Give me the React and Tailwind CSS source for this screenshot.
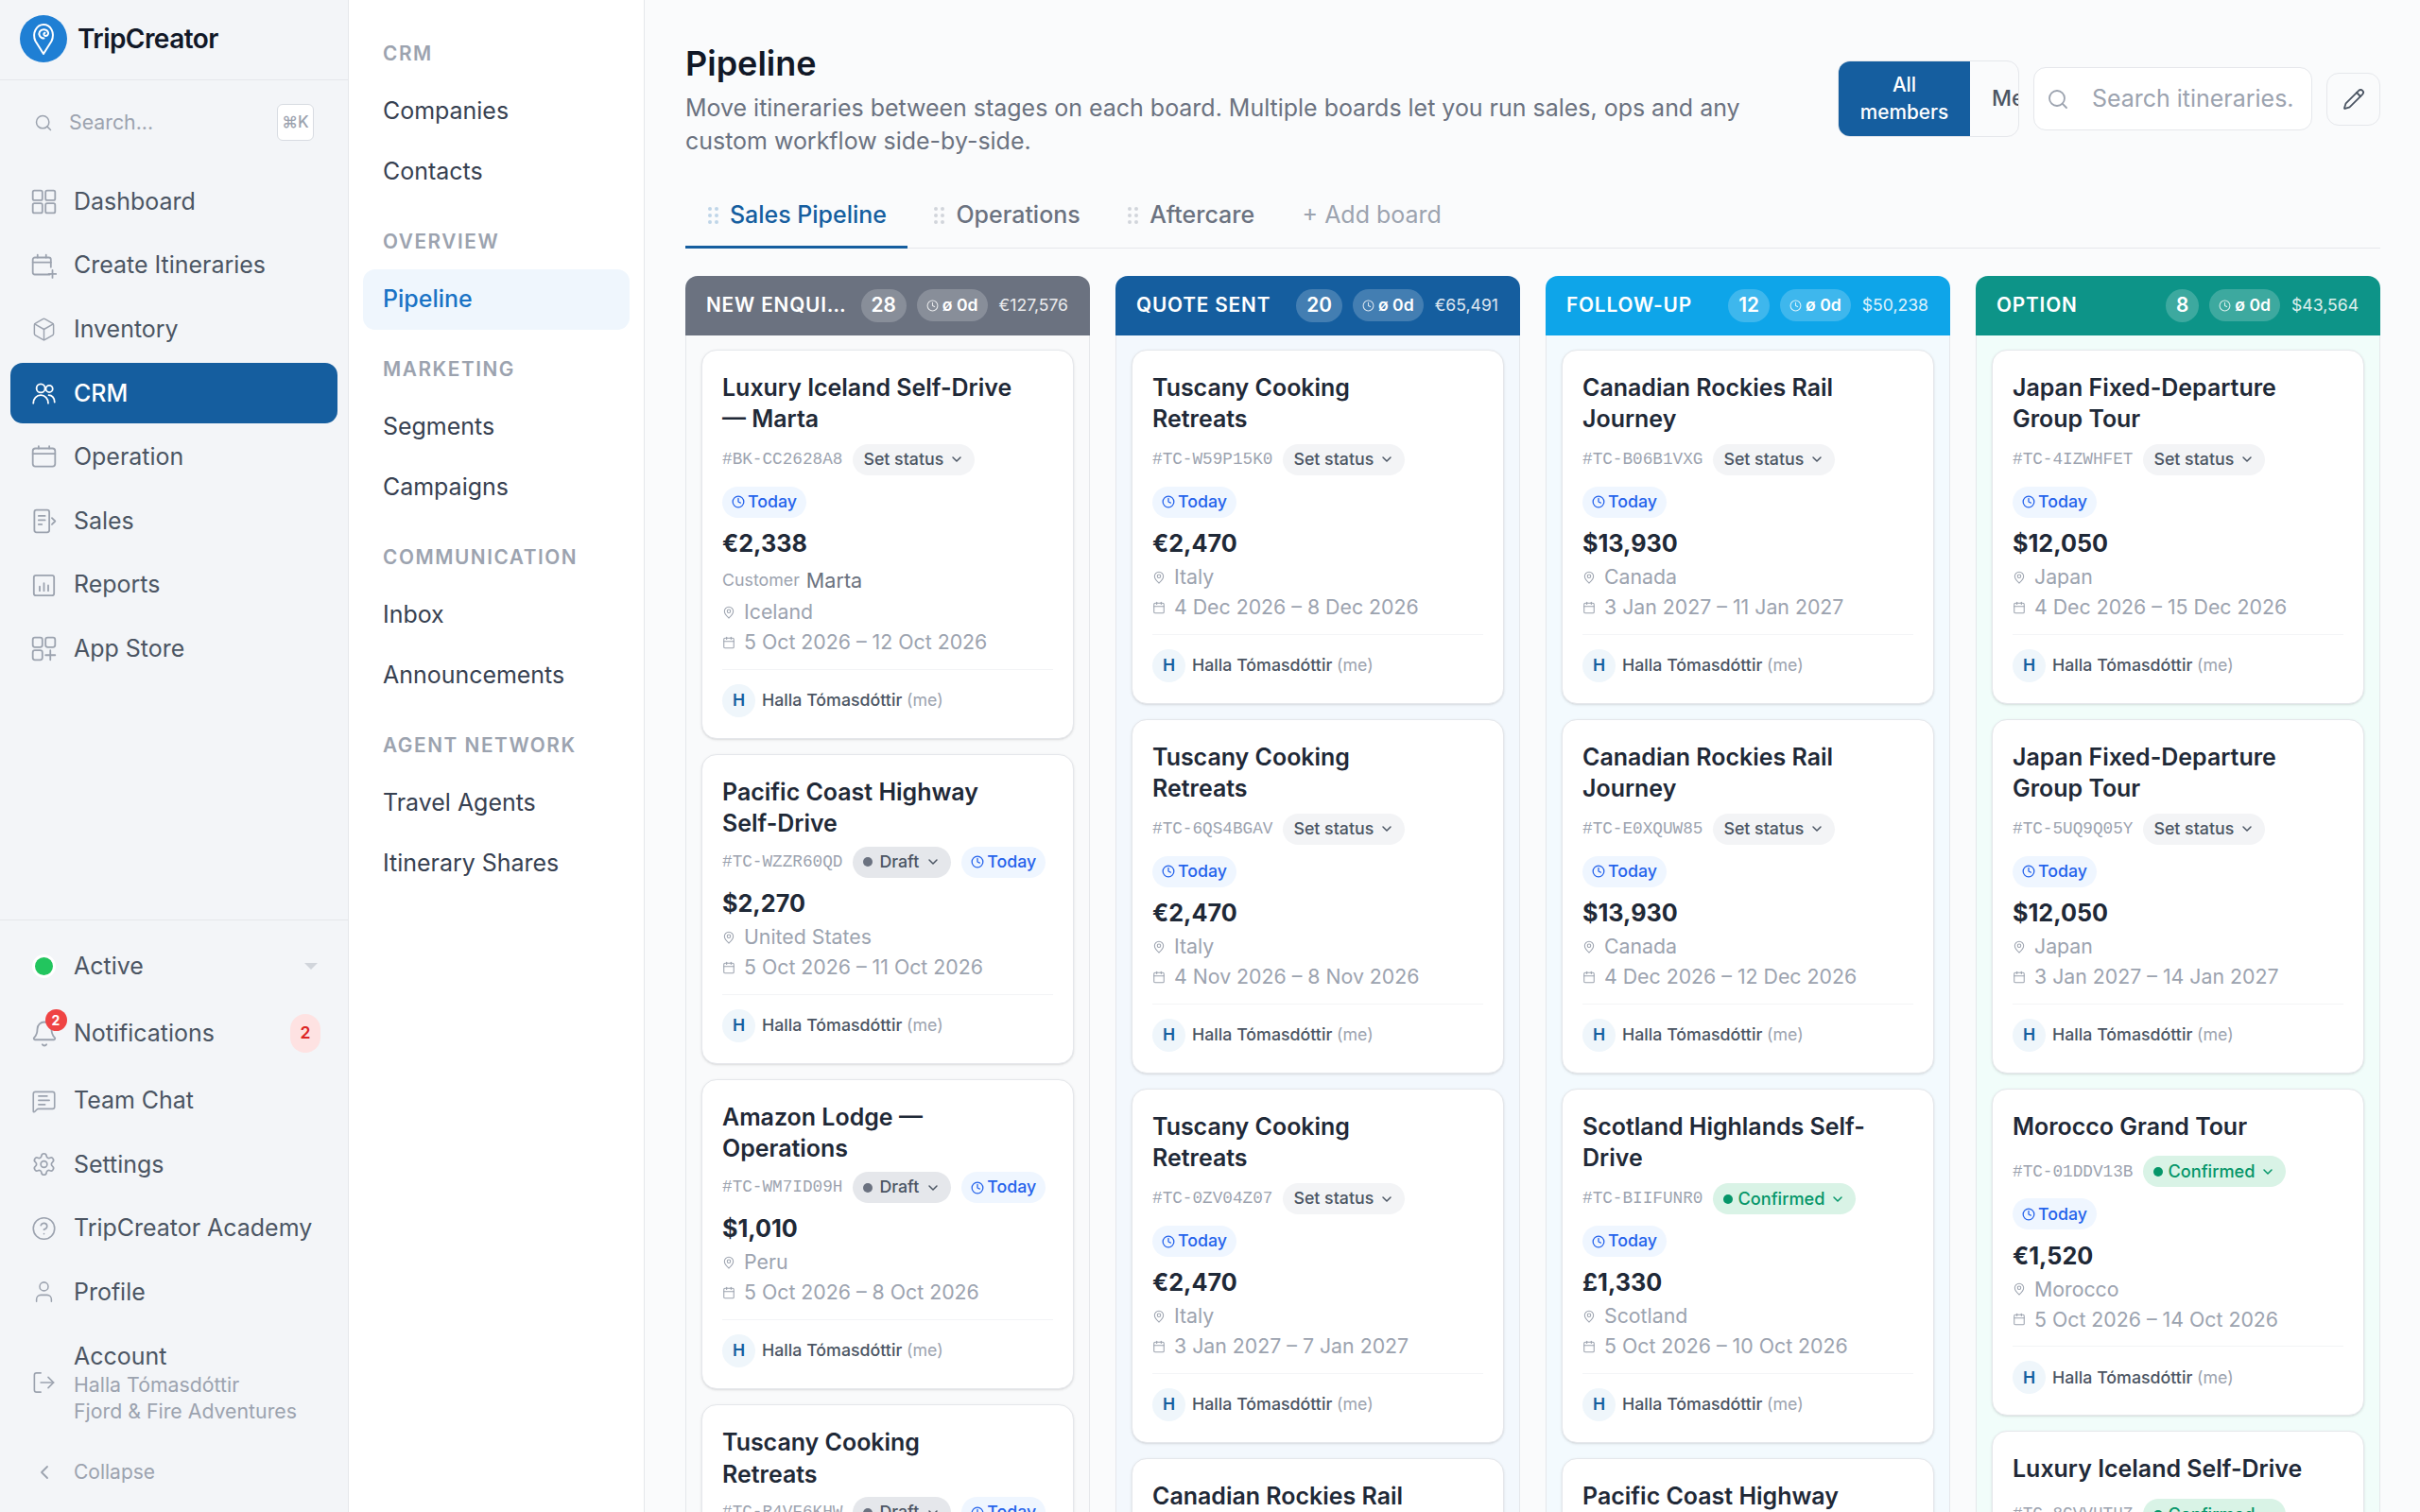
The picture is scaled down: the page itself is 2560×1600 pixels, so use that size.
import React from 'react';
import {
  Search, Box, Bell, Settings, CircleHelp, User, LogOut, ChevronLeft, ChevronDown, Clock, MapPin, Calendar, Pencil, MessageSquareText,
} from 'lucide-react';

const IconBase = ({ children }) => (
  <svg width="27" height="27" viewBox="0 0 24 24" fill="none" stroke="currentColor" strokeWidth="1.6" strokeLinecap="round" strokeLinejoin="round">
    {children}
  </svg>
);

const DashboardIcon = () => (
  <IconBase>
    <rect x="1.5" y="1.5" width="9" height="9" rx="1.5" />
    <rect x="13.5" y="1.5" width="9" height="9" rx="1.5" />
    <rect x="1.5" y="13.5" width="9" height="9" rx="1.5" />
    <rect x="13.5" y="13.5" width="9" height="9" rx="1.5" />
  </IconBase>
);

const CreateIcon = () => (
  <IconBase>
    <path d="M18.5 13V6a2 2 0 0 0-2-2h-13a2 2 0 0 0-2 2v12a2 2 0 0 0 2 2h14" />
    <path d="M1.5 8.5h17M6 1.5V4M14 1.5V4M20 16v7M16.5 19.5h7" />
  </IconBase>
);

const CrmIcon = () => (
  <IconBase>
    <circle cx="9" cy="7" r="4" />
    <circle cx="17" cy="7.5" r="3.2" />
    <path d="M2 21c0-4.5 3-7.5 7-7.5s7 3 7 7.5" />
    <path d="M16.5 13.5c3 0 5.5 2.5 5.5 6.5" />
  </IconBase>
);

const OperationIcon = () => (
  <IconBase>
    <rect x="1.5" y="4" width="21" height="17" rx="2.5" />
    <path d="M1.5 9h21M7 2v2M17 2v2" />
  </IconBase>
);

const SalesIcon = () => (
  <IconBase>
    <rect x="3" y="1.5" width="14" height="21" rx="2" />
    <path d="M7 7h6M7 11h6M7 15h3M19.5 9l3 3-3 3" />
  </IconBase>
);

const ReportsIcon = () => (
  <IconBase>
    <rect x="2.5" y="2.5" width="19" height="19" rx="2" />
    <path d="M8 13v4M12 10v7M16 12v5" />
  </IconBase>
);

const AppStoreIcon = () => (
  <IconBase>
    <rect x="1.5" y="1.5" width="9" height="9" rx="2" />
    <rect x="13.5" y="1.5" width="9" height="9" rx="2" />
    <rect x="1.5" y="13.5" width="9" height="9" rx="2" />
    <path d="M18 13.5v9M13.5 18h9" />
  </IconBase>
);

const Logo = () => (
  <svg width="50" height="50" viewBox="0 0 50 50" fill="none" className="shrink-0">
    <circle cx="25" cy="25" r="25" fill="#1f7fd4" />
    <path d="M25 41 L16.5 27.5 C12.5 19 18 10 25 10 C32.5 10 37.5 18.5 33.5 27.5 Z" stroke="#fff" strokeWidth="2" strokeLinejoin="round" />
    <path d="M25.5 24.5 C21 24.5 19.5 20 21 17.5 C23 14 29 14.5 30 18.5 C30.6 21 28.5 22.5 26.5 21.8 C24.8 21 25 19 26.5 18.7" stroke="#fff" strokeWidth="2" strokeLinecap="round" />
  </svg>
);

const GripDots = ({ className }) => (
  <span className={`grid grid-cols-2 gap-[3px] shrink-0 ${className}`}>
    {[0, 1, 2, 3, 4, 5].map((i) => (
      <span key={i} className="w-[4px] h-[4px] rounded-full bg-current" />
    ))}
  </span>
);

const mainNav = [
  { label: 'Dashboard', icon: <DashboardIcon /> },
  { label: 'Create Itineraries', icon: <CreateIcon /> },
  { label: 'Inventory', icon: <Box size={33} strokeWidth={1.3} /> },
  { label: 'CRM', icon: <CrmIcon />, active: true },
  { label: 'Operation', icon: <OperationIcon /> },
  { label: 'Sales', icon: <SalesIcon /> },
  { label: 'Reports', icon: <ReportsIcon /> },
  { label: 'App Store', icon: <AppStoreIcon /> },
];

const subNav = [
  { title: 'CRM', items: ['Companies', 'Contacts'] },
  { title: 'OVERVIEW', items: ['Pipeline'] },
  { title: 'MARKETING', items: ['Segments', 'Campaigns'] },
  { title: 'COMMUNICATION', items: ['Inbox', 'Announcements'] },
  { title: 'AGENT NETWORK', items: ['Travel Agents', 'Itinerary Shares'] },
];

const card = (title, id, price, place, dates, extra = {}) => ({ title, id, price, place, dates, ...extra });

const columns = [
  {
    title: 'New Enquiry', count: 28, value: '€127,576',
    header: 'bg-[#6b7280]', body: 'bg-[#f9fafb]',
    cards: [
      card('Luxury Iceland Self-Drive — Marta', 'BK-CC2628A8', '€2,338', 'Iceland', '5 Oct 2026 – 12 Oct 2026', { customer: 'Marta' }),
      card('Pacific Coast Highway Self-Drive', 'TC-WZZR60QD', '$2,270', 'United States', '5 Oct 2026 – 11 Oct 2026', { status: 'draft' }),
      card('Amazon Lodge — Operations', 'TC-WM7ID09H', '$1,010', 'Peru', '5 Oct 2026 – 8 Oct 2026', { status: 'draft' }),
      card('Tuscany Cooking Retreats', 'TC-R4VF6KHW', '€2,470', 'Italy', '5 Oct 2026 – 9 Oct 2026', { status: 'draft' }),
    ],
  },
  {
    title: 'Quote Sent', count: 20, value: '€65,491',
    header: 'bg-[#155e9f]', body: 'bg-[#f3f8fd]',
    cards: [
      card('Tuscany Cooking Retreats', 'TC-W59P15K0', '€2,470', 'Italy', '4 Dec 2026 – 8 Dec 2026'),
      card('Tuscany Cooking Retreats', 'TC-6QS4BGAV', '€2,470', 'Italy', '4 Nov 2026 – 8 Nov 2026'),
      card('Tuscany Cooking Retreats', 'TC-0ZV04Z07', '€2,470', 'Italy', '3 Jan 2027 – 7 Jan 2027'),
      card('Canadian Rockies Rail Journey', 'TC-B06B1VXG', '$13,930', 'Canada', '3 Jan 2027 – 11 Jan 2027'),
    ],
  },
  {
    title: 'Follow-up', count: 12, value: '$50,238',
    header: 'bg-[#0ea5e9]', body: 'bg-[#f3fafe]',
    cards: [
      card('Canadian Rockies Rail Journey', 'TC-B06B1VXG', '$13,930', 'Canada', '3 Jan 2027 – 11 Jan 2027'),
      card('Canadian Rockies Rail Journey', 'TC-E0XQUW85', '$13,930', 'Canada', '4 Dec 2026 – 12 Dec 2026'),
      card('Scotland Highlands Self-Drive', 'TC-BIIFUNR0', '£1,330', 'Scotland', '5 Oct 2026 – 10 Oct 2026', { status: 'confirmed' }),
      card('Pacific Coast Highway Self-Drive', 'TC-WZZR60QD', '$2,270', 'United States', '5 Oct 2026 – 11 Oct 2026'),
    ],
  },
  {
    title: 'Option', count: 8, value: '$43,564',
    header: 'bg-[#0d9488]', body: 'bg-[#f1fdfa]',
    cards: [
      card('Japan Fixed-Departure Group Tour', 'TC-4IZWHFET', '$12,050', 'Japan', '4 Dec 2026 – 15 Dec 2026'),
      card('Japan Fixed-Departure Group Tour', 'TC-5UQ9Q05Y', '$12,050', 'Japan', '3 Jan 2027 – 14 Jan 2027'),
      card('Morocco Grand Tour', 'TC-01DDV13B', '€1,520', 'Morocco', '5 Oct 2026 – 14 Oct 2026', { status: 'confirmed', oneLine: true }),
      card('Luxury Iceland Self-Drive', 'TC-8CVVHTHZ', '€2,338', 'Iceland', '5 Oct 2026 – 12 Oct 2026', { status: 'confirmed', oneLine: true }),
    ],
  },
];

const StatusPill = ({ status }) => {
  if (status === 'draft') {
    return (
      <span className="flex items-center gap-[7px] h-[33px] px-[11px] rounded-full bg-[#e5e7eb] text-[#4b5563] text-[17.8px] font-medium">
        <span className="w-[10px] h-[10px] rounded-full bg-[#6b7280]" />
        Draft
        <ChevronDown size={16} strokeWidth={2.2} />
      </span>
    );
  }
  if (status === 'confirmed') {
    return (
      <span className="flex items-center gap-[5px] h-[33px] px-[11px] rounded-full bg-[#d9f3e6] text-[#059669] text-[18.2px] font-medium">
        <span className="w-[10px] h-[10px] rounded-full bg-[#059669]" />
        Confirmed
        <ChevronDown size={16} strokeWidth={2.2} />
      </span>
    );
  }
  return (
    <span className="flex items-center gap-[6px] h-[33px] px-[11px] rounded-full bg-[#f3f4f6] text-[#4b5563] text-[17.8px] font-medium">
      Set status
      <ChevronDown size={16} strokeWidth={2.2} />
    </span>
  );
};

const PipelineCard = ({ item }) => (
  <div className="bg-white border-[1.6px] border-[#e5e7eb] rounded-[16px] shadow-sm px-[21px] pt-[23px] pb-[22px]">
    <h3 className="max-w-[312px] text-[24.96px] leading-[33.6px] font-semibold text-[#1f2937]">{item.title}</h3>
    <div className={`${item.oneLine ? 'mt-[14px]' : item.status === 'draft' ? 'mt-[7px]' : 'mt-[9px]'} flex flex-wrap items-center gap-x-[11px] gap-y-[12px]`}>
      <span className="font-['Liberation_Mono',monospace] text-[17.7px] text-[#9ca3af]">#{item.id}</span>
      <StatusPill status={item.status} />
      <span className="flex items-center gap-[3px] h-[33px] px-[10px] rounded-full bg-[#eff6ff] text-[#2563eb] text-[17.8px] font-medium">
        <Clock size={14} strokeWidth={2.2} />
        Today
      </span>
    </div>
    <div className="mt-[12px] h-[32px] flex items-center text-[25.2px] font-bold text-[#1f2937]">{item.price}</div>
    {item.customer && (
      <div className="mt-[3px] pt-[2px] h-[37px] flex items-center gap-[7px]">
        <span className="text-[17.8px] text-[#9ca3af]">Customer</span>
        <span className="text-[21.6px] text-[#6b7280]">{item.customer}</span>
      </div>
    )}
    <div className={`${item.customer ? '' : 'mt-[3px]'} h-[32px] flex items-center gap-[9px] text-[21.3px] text-[#9ca3af]`}>
      <MapPin size={14} strokeWidth={1.8} className="shrink-0" />
      {item.place}
    </div>
    <div className="h-[32px] flex items-center gap-[9px] text-[21.3px] text-[#9ca3af]">
      <Calendar size={14} strokeWidth={1.8} className="shrink-0" />
      {item.dates}
    </div>
    <div className="mt-[12px] pt-[15px] border-t-[1.6px] border-[#f3f4f6] flex items-center gap-[7px]">
      <span className="w-[35px] h-[35px] rounded-full bg-[#eff6fb] text-[#155e9f] text-[17.6px] font-semibold flex items-center justify-center">H</span>
      <span className="text-[17.8px] font-medium text-[#4b5563]">
        Halla Tómasdóttir <span className="font-normal text-[#9ca3af]">(me)</span>
      </span>
    </div>
  </div>
);

const BottomRow = ({ icon, className = 'h-[64px]', children }) => (
  <div className={`${className} flex items-center gap-[18px] pl-[33px] pr-[29px] text-[24.96px] text-[#4b5563]`}>
    <span className="w-[27px] flex justify-center text-[#9ca3af] shrink-0">{icon}</span>
    {children}
  </div>
);

export default function App() {
  return (
    <div className="h-[1600px] w-[2560px] overflow-hidden flex bg-[#fafbfc] font-['Inter',sans-serif]">
      {/* main sidebar */}
      <aside className="w-[369px] shrink-0 h-full flex flex-col bg-[#f3f5f8] border-r-[1.6px] border-[#e5e7eb]">
        <div className="h-[85px] shrink-0 flex items-center gap-[11px] pl-[21px] pb-[2px] border-b-[1.6px] border-[#e5e7eb]">
          <Logo />
          <span className="text-[28px] font-semibold text-[#111827] tracking-[-0.02em]">TripCreator</span>
        </div>
        <div className="mt-[25px] h-[39px] shrink-0 flex items-center gap-[17px] pl-[36px] pr-[36px] text-[#9ca3af]">
          <Search size={20} strokeWidth={1.8} />
          <span className="flex-1 text-[21.3px]">Search...</span>
          <span className="w-[39px] h-[39px] flex items-center justify-center rounded-[6px] border-[1.6px] border-[#d8dce2] bg-white text-[17px] font-medium">⌘K</span>
        </div>
        <nav className="mt-[32.5px] flex-1 flex flex-col gap-[3.6px] px-[11px]">
          {mainNav.map((item) => (
            <div
              key={item.label}
              className={`h-[64px] flex items-center gap-[18px] pl-[22px] rounded-[13px] text-[24.96px] ${
                item.active ? 'bg-[#155e9f] text-white font-medium' : 'text-[#4b5563]'
              }`}
            >
              <span className={`w-[27px] flex justify-center ${item.active ? 'text-white' : 'text-[#9ca3af]'}`}>{item.icon}</span>
              {item.label}
            </div>
          ))}
        </nav>
        <div className="shrink-0 border-t-[1.6px] border-[#e5e7eb] pt-[16px] pb-[10px] flex flex-col gap-[3.4px]">
          <BottomRow icon={<span className="block w-[25px] h-[25px] rounded-full bg-[#22c55e] border-[3px] border-white" />}>
            <span className="flex-1">Active</span>
            <span className="mr-[3px] w-0 h-0 border-x-[7px] border-x-transparent border-t-[7px] border-t-[#d1d5db]" />
          </BottomRow>
          <BottomRow
            className="h-[72px]"
            icon={
              <span className="relative block">
                <Bell size={30} strokeWidth={1.45} />
                <span className="absolute -top-[11px] left-[16px] w-[23px] h-[23px] rounded-full bg-[#ef4444] text-white text-[14px] font-bold flex items-center justify-center">2</span>
              </span>
            }
          >
            <span className="flex-1">Notifications</span>
            <span className="w-[32px] h-[41px] rounded-full bg-[#fee2e2] text-[#dc2626] text-[17.6px] font-semibold flex items-center justify-center">2</span>
          </BottomRow>
          <BottomRow icon={<MessageSquareText size={29} strokeWidth={1.45} />}>Team Chat</BottomRow>
          <BottomRow icon={<Settings size={28} strokeWidth={1.5} />}>Settings</BottomRow>
          <BottomRow icon={<CircleHelp size={30} strokeWidth={1.45} />}>TripCreator Academy</BottomRow>
          <BottomRow icon={<User size={32} strokeWidth={1.35} />}>Profile</BottomRow>
          <BottomRow className="h-[120px]" icon={<LogOut size={30} strokeWidth={1.45} />}>
            <div className="flex flex-col">
              <span className="leading-[32px]">Account</span>
              <span className="text-[21.3px] leading-[28px] text-[#9ca3af]">Halla Tómasdóttir</span>
              <span className="text-[21.3px] leading-[28px] text-[#9ca3af]">Fjord &amp; Fire Adventures</span>
            </div>
          </BottomRow>
          <div className="h-[64px] flex items-center gap-[18px] pl-[33px] text-[21px] text-[#9ca3af]">
            <span className="w-[27px] flex justify-center"><ChevronLeft size={24} strokeWidth={1.8} /></span>
            Collapse
          </div>
        </div>
      </aside>

      {/* secondary nav */}
      <aside className="w-[313px] shrink-0 h-full bg-white border-r-[1.6px] border-[#e5e7eb] pt-[44px] px-[15px]">
        {subNav.map((section) => (
          <div key={section.title} className="mb-[29px]">
            <div className="h-[26px] flex items-center px-[21px] text-[20.8px] font-semibold tracking-[0.075em] text-[#9ca3af]">{section.title}</div>
            <div className="mt-[16px] flex flex-col">
              {section.items.map((label) => (
                <div
                  key={label}
                  className={`h-[64px] flex items-center px-[21px] rounded-[13px] text-[24.96px] ${
                    label === 'Pipeline' ? 'bg-[#eff6fd] text-[#1a73c5] font-medium' : 'text-[#374151]'
                  }`}
                >
                  {label}
                </div>
              ))}
            </div>
          </div>
        ))}
      </aside>

      {/* main */}
      <main className="flex-1 min-w-0 h-full pl-[43px] pr-[42px] pt-[45px]">
        <div className="flex justify-between items-start">
          <div className="w-[1130px]">
            <h1 className="text-[36px] leading-[44px] font-semibold text-[#111827]">Pipeline</h1>
            <p className="mt-[8px] text-[24.96px] leading-[35px] text-[#6b7280]">
              Move itineraries between stages on each board. Multiple boards let you run sales, ops and any custom workflow side-by-side.
            </p>
          </div>
          <div className="flex items-center gap-[15px] mt-[19px]">
            <div className="w-[192px] h-[81px] flex overflow-hidden rounded-[13px] border-[1.6px] border-[#e5e7eb] shrink-0">
              <div className="w-[139px] shrink-0 pb-[2px] bg-[#155e9f] text-white text-[20.8px] leading-[29px] font-medium flex items-center justify-center text-center">
                All<br />members
              </div>
              <div className="pl-[23px] flex items-center text-[23px] font-medium text-[#4b5563] whitespace-nowrap">Me</div>
            </div>
            <div className="w-[295px] h-[67px] flex items-center gap-[24px] pl-[13px] pr-[20px] bg-white rounded-[13px] border-[1.6px] border-[#e5e7eb]">
              <Search size={24} strokeWidth={1.8} className="text-[#9ca3af] shrink-0" />
              <input readOnly placeholder="Search itineraries..." className="w-full min-w-0 outline-none bg-transparent text-[24.96px] placeholder-[#9ca3af]" />
            </div>
            <div className="w-[57px] h-[56px] flex items-center justify-center rounded-[13px] border-[1.6px] border-[#e5e7eb] text-[#4b5563]">
              <Pencil size={24} strokeWidth={1.8} />
            </div>
          </div>
        </div>

        <div className="mt-[26.5px] flex gap-[4.5px] border-b-[1.6px] border-[#e5e7eb] h-[69px]">
          <div className="h-[69px] flex items-center gap-[12px] pl-[24px] pr-[22px] border-y-[3.2px] border-t-transparent border-b-[#155e9f] text-[24.96px] font-medium text-[#155e9f]">
            <GripDots className="text-[#bfd5e8]" />
            Sales Pipeline
          </div>
          <div className="h-[69px] flex items-center gap-[12px] pl-[24px] pr-[22px] text-[24.96px] font-medium text-[#6b7280]">
            <GripDots className="text-[#d1d5db]" />
            Operations
          </div>
          <div className="h-[69px] flex items-center gap-[12px] pl-[24px] pr-[22px] text-[24.96px] font-medium text-[#6b7280]">
            <GripDots className="text-[#d1d5db]" />
            Aftercare
          </div>
          <div className="h-[69px] flex items-center px-[24px] text-[24.96px] text-[#9ca3af]">+ Add board</div>
        </div>

        <div className="mt-[29px] grid grid-cols-4 gap-[27px]">
          {columns.map((col) => (
            <div key={col.title} className="min-w-0">
              <div className={`${col.header} h-[63px] rounded-t-[13px] flex items-center pl-[22px] pr-[23px] text-white`}>
                <span className="flex-1 min-w-0 truncate uppercase text-[20.8px] font-semibold tracking-[0.04em]">{col.title}</span>
                <span className="ml-[14px] shrink-0 min-w-[35px] h-[35px] px-[11px] rounded-full bg-white/20 flex items-center justify-center text-[20.8px] font-semibold">{col.count}</span>
                <span className="ml-[11px] shrink-0 h-[34px] px-[10px] rounded-full bg-white/20 flex items-center gap-[4px] text-[17.6px] font-semibold">
                  <Clock size={13} strokeWidth={2} className="opacity-80" />
                  ø 0d
                </span>
                <span className="ml-[12px] shrink-0 text-[17.6px] text-white/85">{col.value}</span>
              </div>
              <div className={`${col.body} border-x-[1.6px] border-[#e5e7eb] px-[16px] pt-[15px] flex flex-col gap-[16px]`}>
                {col.cards.map((item, i) => (
                  <PipelineCard key={i} item={item} />
                ))}
              </div>
            </div>
          ))}
        </div>
      </main>
    </div>
  );
}
